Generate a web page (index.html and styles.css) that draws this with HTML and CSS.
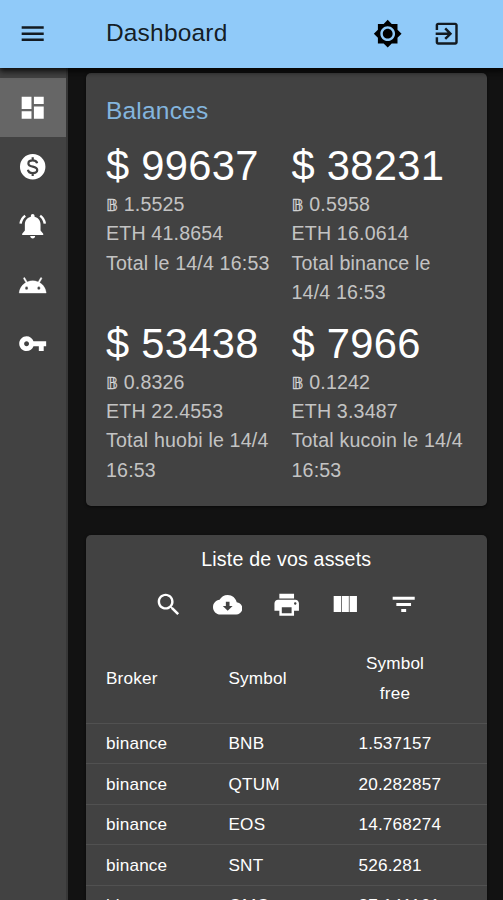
FILE: index.html
```html
<!DOCTYPE html>
<html lang="fr">
<head>
<meta charset="utf-8">
<title>Dashboard</title>
<link rel="stylesheet" href="styles.css">
</head>
<body>
<header class="appbar">
  <svg class="icon menu" viewBox="0 0 24 24"><path d="M3 18h18v-2H3v2zm0-5h18v-2H3v2zm0-7v2h18V6H3z"/></svg>
  <h1 class="heading">Dashboard</h1>
  <svg class="icon theme" viewBox="0 0 24 24"><path d="M20 8.69V4h-4.69L12 .69 8.69 4H4v4.69L.69 12 4 15.31V20h4.69L12 23.31 15.31 20H20v-4.69L23.31 12 20 8.69zM12 18c-3.31 0-6-2.69-6-6s2.69-6 6-6 6 2.69 6 6-2.69 6-6 6zm0-10c-2.21 0-4 1.79-4 4s1.79 4 4 4 4-1.79 4-4-1.79-4-4-4z"/></svg>
  <svg class="icon" viewBox="0 0 24 24"><path d="M10.09 15.59L11.5 17l5-5-5-5-1.41 1.41L12.67 11H3v2h9.67l-2.58 2.59zM19 3H5c-1.11 0-2 .9-2 2v4h2V5h14v14H5v-4H3v4c0 1.1.89 2 2 2h14c1.1 0 2-.9 2-2V5c0-1.1-.9-2-2-2z"/></svg>
</header>
<div class="layout">
  <nav class="drawer">
    <a class="nav active"><svg class="icon" viewBox="0 0 24 24"><path d="M3 13h8V3H3v10zm0 8h8v-6H3v6zm10 0h8V11h-8v10zm0-18v6h8V3h-8z"/></svg></a>
    <a class="nav"><svg class="icon" viewBox="0 0 24 24"><path d="M12 1.6a10.4 10.4 0 1 0 0 20.800a10.4 10.4 0 1 0 0-20.800z"/><path class="cut" d="M12 4.300v3M12 16.700v3M15.600 9.200C15.300 7.700 14 6.900 12 6.900c-2.100 0-3.500 1-3.500 2.500 0 3.700 7.200 1.500 7.200 5.300 0 1.500-1.500 2.500-3.700 2.500-2.200 0-3.600-1-3.900-2.700"/></svg></a>
    <a class="nav"><svg class="icon" viewBox="0 0 24 24"><path d="M18.400 11c0-3.200-1.900-5.700-4.900-6.300V4c0-.83-.67-1.500-1.500-1.500s-1.500.67-1.500 1.500v.7C7.500 5.300 5.600 7.800 5.600 11v5l-2.200 2.500v1h17.200v-1L18.400 16v-5zm-6.400 11.500c1.100 0 2-.9 2-2h-4c0 1.100.9 2 2 2z"/><path class="arc" d="M2.100 10.300C2.500 7.500 3.700 5.300 5.900 3.800M21.900 10.300C21.500 7.500 20.300 5.300 18.100 3.800"/></svg></a>
    <a class="nav"><svg class="icon android" viewBox="0 0 24 24"><path d="M17.6 9.48l1.84-3.18c.16-.31.04-.69-.26-.85-.29-.15-.65-.06-.83.22l-1.88 3.24c-2.86-1.21-6.08-1.21-8.94 0L5.65 5.67c-.19-.29-.58-.38-.87-.2-.28.18-.37.54-.22.83L6.4 9.48C3.3 11.25 1.28 14.44 1 18h22c-.28-3.56-2.3-6.75-5.4-8.52zM7 15.25c-.69 0-1.25-.56-1.25-1.25S6.31 12.75 7 12.75 8.25 13.31 8.25 14 7.69 15.25 7 15.25zm10 0c-.69 0-1.25-.56-1.25-1.25s.56-1.25 1.25-1.25 1.25.56 1.25 1.25-.56 1.25-1.25 1.25z"/></svg></a>
    <a class="nav"><svg class="icon" viewBox="0 0 24 24"><path d="M12.65 10C11.83 7.67 9.61 6 7 6c-3.31 0-6 2.69-6 6s2.69 6 6 6c2.61 0 4.83-1.67 5.65-4H17v4h4v-4h2v-4H12.65zM7 14c-1.1 0-2-.9-2-2s.9-2 2-2 2 .9 2 2-.9 2-2 2z"/></svg></a>
  </nav>
  <main class="content">
    <section class="card balances">
      <h2 class="card-title">Balances</h2>
      <div class="grid">
        <div class="balance"><div class="amount">$ 99637</div><p><span class="btc">𝔹</span> 1.5525</p><p>ETH 41.8654</p><p>Total le 14/4 16:53</p></div>
        <div class="balance"><div class="amount">$ 38231</div><p><span class="btc">𝔹</span> 0.5958</p><p>ETH 16.0614</p><p>Total binance le 14/4 16:53</p></div>
        <div class="balance"><div class="amount">$ 53438</div><p><span class="btc">𝔹</span> 0.8326</p><p>ETH 22.4553</p><p>Total huobi le 14/4 16:53</p></div>
        <div class="balance"><div class="amount">$ 7966</div><p><span class="btc">𝔹</span> 0.1242</p><p>ETH 3.3487</p><p>Total kucoin le 14/4 16:53</p></div>
      </div>
    </section>
    <section class="card assets">
      <h2 class="assets-title">Liste de vos assets</h2>
      <div class="toolbar">
        <svg class="icon" viewBox="0 0 24 24"><path d="M15.5 14h-.79l-.28-.27C15.41 12.59 16 11.11 16 9.5 16 5.91 13.09 3 9.5 3S3 5.91 3 9.5 5.91 16 9.5 16c1.61 0 3.09-.59 4.23-1.57l.27.28v.79l5 4.99L20.49 19l-4.99-5zm-6 0C7.01 14 5 11.99 5 9.5S7.01 5 9.5 5 14 7.01 14 9.5 11.99 14 9.5 14z"/></svg>
        <svg class="icon" viewBox="0 0 24 24"><path d="M19.35 10.04C18.67 6.59 15.64 4 12 4 9.11 4 6.6 5.64 5.35 8.04 2.34 8.36 0 10.91 0 14c0 3.31 2.69 6 6 6h13c2.76 0 5-2.24 5-5 0-2.64-2.05-4.78-4.65-4.96zM16 13l-4 4-4-4h2.500V9.500h3V13H16z"/></svg>
        <svg class="icon" viewBox="0 0 24 24"><path d="M19 8H5c-1.66 0-3 1.34-3 3v6h4v4h12v-4h4v-6c0-1.66-1.34-3-3-3zm-3 11H8v-5h8v5zm3-7c-.55 0-1-.45-1-1s.45-1 1-1 1 .45 1 1-.45 1-1 1zm-1-9H6v4h12V3z"/></svg>
        <svg class="icon" viewBox="0 0 24 24"><path d="M3 5h6v13H3zM9.600 5h5.800v13H9.600zM16 5h6v13h-6z"/></svg>
        <svg class="icon" viewBox="0 0 24 24"><path d="M10 18h4v-2.400h-4V18zM3 5.600V8h18V5.600H3zm3 7.400h12v-2.400H6V13z"/></svg>
      </div>
      <table class="table">
        <thead><tr><th>Broker</th><th>Symbol</th><th class="free">Symbol<br>free</th></tr></thead>
        <tbody>
          <tr><td>binance</td><td>BNB</td><td>1.537157</td></tr>
          <tr><td>binance</td><td>QTUM</td><td>20.282857</td></tr>
          <tr><td>binance</td><td>EOS</td><td>14.768274</td></tr>
          <tr><td>binance</td><td>SNT</td><td>526.281</td></tr>
          <tr><td>binance</td><td>OMG</td><td>27.141161</td></tr>
        </tbody>
      </table>
    </section>
  </main>
</div>
</body>
</html>
```
FILE: styles.css
```css
* { box-sizing: border-box; }
html, body { height: 100%; overflow: hidden; }
body {
  margin: 0;
  background: #121212;
  color: #fff;
  font-family: "Liberation Sans", Arial, sans-serif;
  display: flex;
  flex-direction: column;
}
h1, h2, p { margin: 0; font-weight: 400; }
.icon { width: 29.4px; height: 29.4px; fill: currentColor; flex: none; display: block; }
.cut { fill: none; stroke: #424242; stroke-width: 1.8; }
.arc { fill: none; stroke: currentColor; stroke-width: 2; }
.android { stroke: currentColor; stroke-width: .3; margin-top: 1px; }
.appbar {
  height: 68px;
  flex: none;
  background: #90caf9;
  color: rgba(0, 0, 0, .87);
  display: flex;
  align-items: center;
  padding: 0 42px 1px 18px;
  box-shadow: 0 2px 5px rgba(0, 0, 0, .7), 0 5px 6px rgba(0, 0, 0, .35);
  position: relative;
}
.heading { font-size: 24.5px; letter-spacing: .2px; line-height: 36px; margin: 0 0 2px 58.5px; flex: 1; }
.theme { margin-right: 29.5px; color: #000; }
.layout { display: flex; flex: 1; min-height: 0; }
.drawer { width: 68px; flex: none; background: #424242; border-right: 2px solid #373737; padding-top: 10px; }
.nav { height: 59px; display: flex; align-items: center; padding: 1px 0 0 18px; }
.nav.active { background: #666; }
.content { flex: 1; padding: 5px 17px 0 18px; }
.card { background: #424242; border-radius: 5px; box-shadow: 0 1px 3px rgba(0, 0, 0, .6); }
.balances { height: 433px; padding: 20px 20px 0; }
.card-title { font-size: 24.5px; letter-spacing: .2px; line-height: 36px; margin-bottom: 1px; color: #90caf9; opacity: .85; }
.grid { display: grid; grid-template-columns: 165.5px 175px; column-gap: 20px; }
.balance { font-size: 19.6px; letter-spacing: .18px; line-height: 29.4px; color: rgba(255, 255, 255, .7); }
.amount { font-size: 41.7px; letter-spacing: .3px; line-height: 51px; height: 60px; padding-top: 10px; color: #fff; }
.btc { font-family: "DejaVu Sans", sans-serif; font-size: 16.5px; line-height: 1; letter-spacing: 0; -webkit-text-stroke: .3px currentColor; }
.assets { margin-top: 29px; height: 420px; padding-top: 9px; }
.assets-title { font-size: 19.6px; letter-spacing: .18px; line-height: 30px; text-align: center; }
.toolbar { display: flex; justify-content: center; gap: 29.4px; padding-top: 16px; margin-bottom: 15px; height: 45.4px; }
.table { border-collapse: collapse; table-layout: fixed; width: 100%; font-size: 17.15px; letter-spacing: .18px; }
.table th, .table td { font-weight: 400; text-align: left; border-bottom: 1px solid #515151; padding: 0 0 0 20px; }
.table td { height: 40.5px; }
.table th { height: 89px; line-height: 29.4px; }
.table th:nth-child(1) { width: 122.5px; }
.table th:nth-child(2) { width: 130px; }
.table th.free { text-align: center; padding: 0 36px 0 1px; }
```
